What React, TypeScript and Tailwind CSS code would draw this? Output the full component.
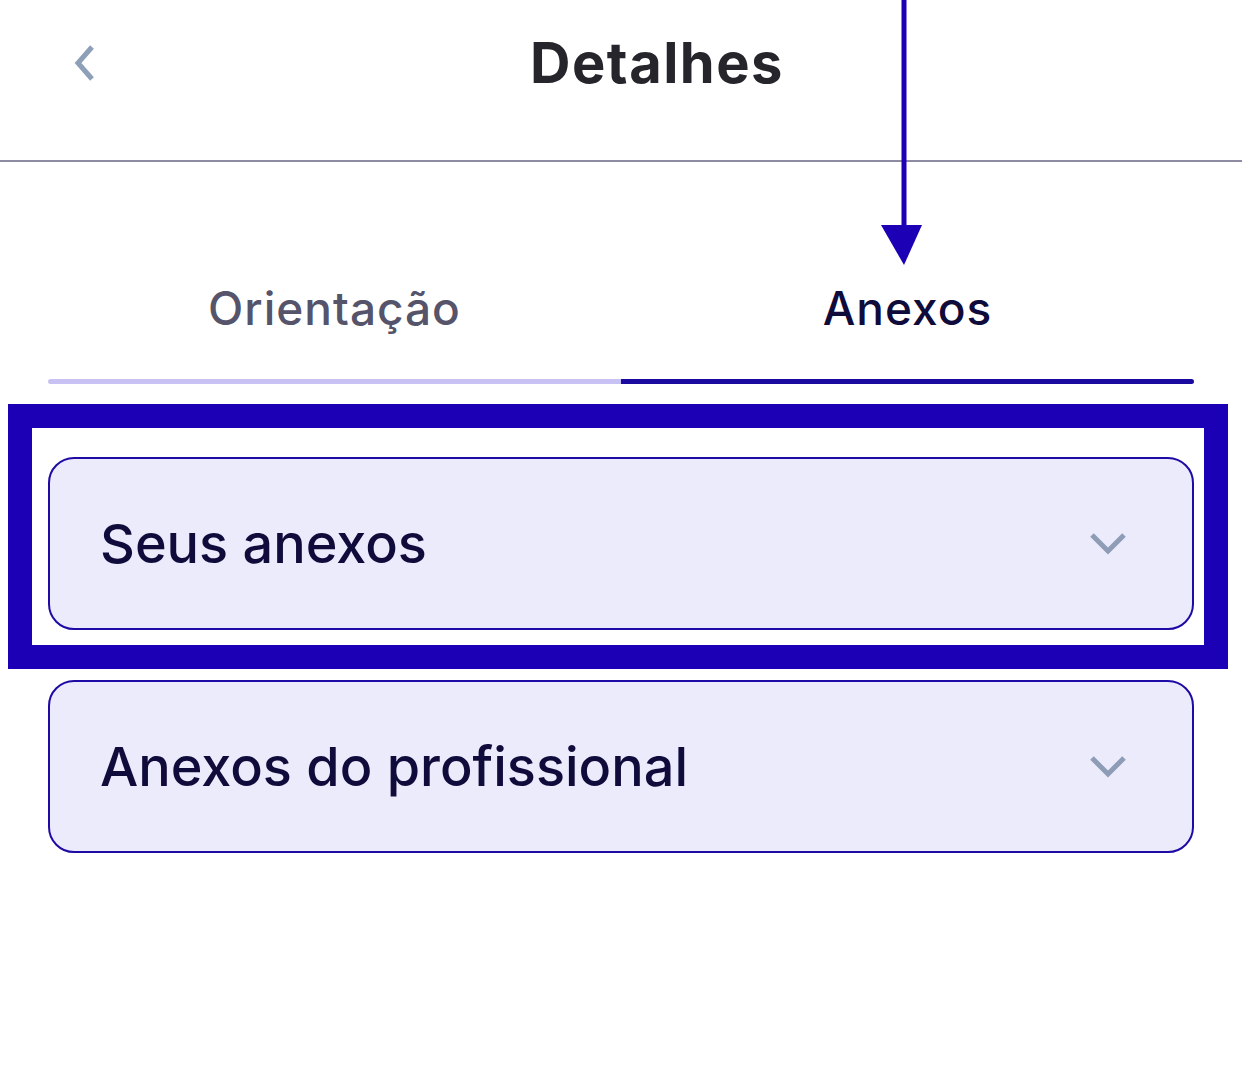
import { useState } from "react";

const tabs = ["Orientação", "Anexos"];
const sections = ["Seus anexos", "Anexos do profissional"];

function ChevronDown() {
    return (
        <svg width="38" height="24" viewBox="0 0 38 24" fill="none">
            <path d="M3 3 L19 19 L35 3" stroke="#8f9cb6" strokeWidth="5" strokeLinecap="butt" />
        </svg>
    );
}

export default function App() {
    const [active, setActive] = useState(1);

    return (
        <div className="relative w-[1242px] h-[1080px] bg-white overflow-hidden font-['Inter',sans-serif]">
            {/* Header */}
            <div className="flex items-center h-[162px] pb-[34px] pl-[70px] pr-[28px] border-b-2 border-[#8e8ca3]">
                <button className="w-[30px] flex items-center">
                    <svg width="30" height="38" viewBox="0 0 30 38" fill="none">
                        <path d="M22 3 L8 19 L22 35" stroke="#8ea0b8" strokeWidth="5" />
                    </svg>
                </button>
                <h1 className="flex-1 text-center text-[56px] leading-none font-bold tracking-[1.5px] text-[#26252c]">Detalhes</h1>
            </div>

            {/* Tabs */}
            <div className="mx-[48px] mt-[123px]">
                <div className="flex">
                    {tabs.map((t, i) => (
                        <button
                            key={t}
                            onClick={() => setActive(i)}
                            className={
                                i === active
                                    ? "flex-1 text-center text-[46px] leading-none font-medium tracking-[1px] text-[#0f0b3b]"
                                    : "flex-1 text-center text-[46px] leading-none font-medium tracking-[1px] text-[#55546a]"
                            }
                        >
                            {t}
                        </button>
                    ))}
                </div>
                <div className="flex h-[5px] mt-[48px] rounded-full overflow-hidden">
                    <div className={active === 0 ? "flex-1 bg-[#1a0aa0]" : "flex-1 bg-[#c8c2f4]"}></div>
                    <div className={active === 1 ? "flex-1 bg-[#1a0aa0]" : "flex-1 bg-[#c8c2f4]"}></div>
                </div>
            </div>

            {/* Accordion cards */}
            <div className="mx-[48px] mt-[73px] flex flex-col gap-[50px]">
                {sections.map((s) => (
                    <div
                        key={s}
                        className="h-[173px] rounded-[26px] border-2 border-[#1e0aa5] bg-[#ecebfc] flex items-center justify-between pl-[50px] pr-[65px]"
                    >
                        <span className="text-[54px] leading-none font-medium text-[#0f0b3b]">{s}</span>
                        <ChevronDown />
                    </div>
                ))}
            </div>

            {/* Annotation: highlight frame */}
            <div className="absolute left-[8px] top-[404px] w-[1220px] h-[265px] border-[24px] border-[#1c00b6] pointer-events-none"></div>

            {/* Annotation: arrow */}
            <svg className="absolute left-[878px] top-0 pointer-events-none" width="48" height="270" viewBox="0 0 48 270">
                <rect x="23.5" y="0" width="5" height="230" fill="#1c00b6" />
                <polygon points="3,225 44,225 26,265" fill="#1c00b6" />
            </svg>
        </div>
    );
}
